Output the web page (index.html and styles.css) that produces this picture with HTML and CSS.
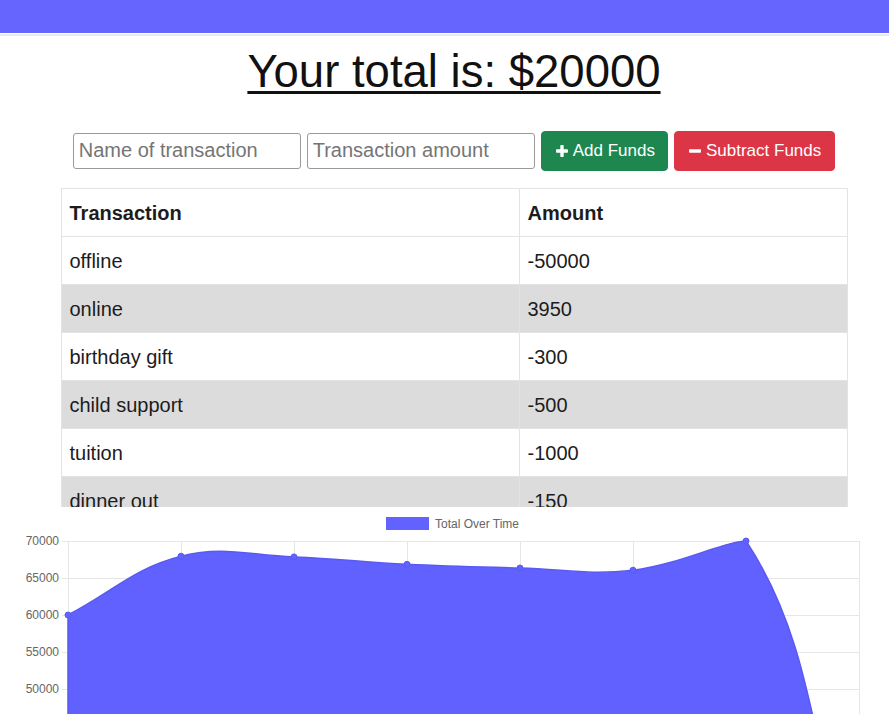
FILE: index.html
```html
<!DOCTYPE html>
<html lang="en">
<head>
<meta charset="utf-8">
<title>Budget Tracker</title>
<link rel="stylesheet" href="styles.css">
</head>
<body>
<div class="topbar"></div>
<main class="main">
  <h1 class="total"><span class="total-text">Your total is: $20000</span></h1>
  <form class="controls">
    <input class="field" type="text" placeholder="Name of transaction">
    <input class="field" type="text" placeholder="Transaction amount">
    <button class="btn btn-add" type="button">
      <svg class="btn-icon" viewBox="0 0 12 12" width="12" height="12"><rect x="4.3" y="0" width="3.4" height="12" rx="0.8"/><rect x="0" y="4.3" width="12" height="3.4" rx="0.8"/></svg>
      <span>Add Funds</span>
    </button>
    <button class="btn btn-sub" type="button">
      <svg class="btn-icon" viewBox="0 0 12 12" width="12" height="12"><rect x="0" y="4.3" width="12" height="3.4" rx="0.8"/></svg>
      <span>Subtract Funds</span>
    </button>
  </form>
  <div class="table-wrap">
    <table class="tx-table">
      <colgroup><col class="col-name"><col class="col-amt"></colgroup>
      <thead>
        <tr><th>Transaction</th><th>Amount</th></tr>
      </thead>
      <tbody>
        <tr><td>offline</td><td>-50000</td></tr>
        <tr><td>online</td><td>3950</td></tr>
        <tr><td>birthday gift</td><td>-300</td></tr>
        <tr><td>child support</td><td>-500</td></tr>
        <tr><td>tuition</td><td>-1000</td></tr>
        <tr><td>dinner out</td><td>-150</td></tr>
      </tbody>
    </table>
  </div>
</main>
<div class="chart">
  <svg class="chart-svg" width="889" height="215" viewBox="0 507 889 215">
    <g class="legend">
      <rect x="386" y="517" width="43" height="13" class="legend-box"/>
      <text x="435" y="528" class="legend-text">Total Over Time</text>
    </g>
    <g class="grid">
      <line x1="62" y1="541.5" x2="860" y2="541.5"/>
      <line x1="62" y1="578.5" x2="860" y2="578.5"/>
      <line x1="62" y1="615.5" x2="860" y2="615.5"/>
      <line x1="62" y1="652.5" x2="860" y2="652.5"/>
      <line x1="62" y1="689.5" x2="860" y2="689.5"/>
      <line x1="62" y1="726.5" x2="860" y2="726.5"/>
      <line x1="68.5" y1="541" x2="68.5" y2="730"/>
      <line x1="181.5" y1="541" x2="181.5" y2="730"/>
      <line x1="294.5" y1="541" x2="294.5" y2="730"/>
      <line x1="407.5" y1="541" x2="407.5" y2="730"/>
      <line x1="520.5" y1="541" x2="520.5" y2="730"/>
      <line x1="633.5" y1="541" x2="633.5" y2="730"/>
      <line x1="746.5" y1="541" x2="746.5" y2="730"/>
      <line x1="859.5" y1="541" x2="859.5" y2="730"/>
    </g>
    <g class="yticks">
      <text x="59" y="545">70000</text>
      <text x="59" y="582">65000</text>
      <text x="59" y="619">60000</text>
      <text x="59" y="656">55000</text>
      <text x="59" y="693">50000</text>
    </g>
    <path class="area" d="M68,615 C113.2,591.5 133.1,568.5 181,556.2 C223.5,545.3 248.85,555.3 294,556.9 C339.25,558.5 361.76,562.1 407,564.3 C452.2,566.5 474.8,566.8 520,568 C565.2,569.2 588.5,575.5 633,570.2 C678.9,564.7 725.05,541 746,541 C815.45,645.7 813.8,763 859,911 L859,1000 L68,1000 Z"/>
    <g class="points">
      <circle cx="68" cy="615" r="3"/>
      <circle cx="181" cy="556.2" r="3"/>
      <circle cx="294" cy="556.9" r="3"/>
      <circle cx="407" cy="564.3" r="3"/>
      <circle cx="520" cy="568" r="3"/>
      <circle cx="633" cy="570.2" r="3"/>
      <circle cx="746" cy="541" r="3"/>
    </g>
  </svg>
</div>
</body>
</html>
```
FILE: styles.css
```css
html, body {
  margin: 0;
  padding: 0;
  background: #fff;
}

body {
  font-family: "Liberation Sans", Arial, sans-serif;
  color: #212529;
  overflow: hidden;
}

.topbar {
  height: 33px;
  background: #6666ff;
  border-bottom: 1px solid #fff;
  box-shadow: 0 2px 0 #ebebeb;
}

.main {
  padding-left: 19px;
  display: flex;
  flex-direction: column;
  align-items: center;
}

.total {
  margin: 11px 0 0;
  font-size: 45.5px;
  line-height: 54px;
  font-weight: normal;
  color: #111;
}

.total-text {
  text-decoration: underline;
  text-decoration-thickness: 3px;
  text-underline-offset: 4px;
}

.controls {
  margin: 32px 0 0;
  display: flex;
  align-items: baseline;
  gap: 6px;
}

.field {
  box-sizing: border-box;
  width: 228px;
  height: 36px;
  margin: 0;
  padding: 0 5px;
  border: 1px solid #999;
  border-radius: 3px;
  font-family: "Liberation Sans", Arial, sans-serif;
  font-size: 20px;
  color: #333;
  background: #fff;
}

.field::placeholder {
  color: #757575;
}

.btn {
  display: inline-flex;
  align-items: center;
  gap: 5px;
  flex: none;
  box-sizing: border-box;
  height: 40px;
  margin: 0;
  padding: 9px 13px 9px 14px;
  border: 1px solid transparent;
  border-radius: 4px;
  font-family: "Liberation Sans", Arial, sans-serif;
  font-size: 17px;
  line-height: 20px;
  white-space: nowrap;
  color: #fff;
  cursor: pointer;
}

.btn-icon {
  display: block;
  fill: #fff;
  flex: none;
}

.btn-add {
  background: #1e8750;
  border-color: #1e8750;
  padding-right: 12px;
}

.btn-sub {
  background: #dc3545;
  border-color: #dc3545;
}

.table-wrap {
  margin-top: 17px;
  width: 787px;
  height: 319px;
  overflow: hidden;
}

.tx-table {
  width: 787px;
  border-collapse: collapse;
  table-layout: fixed;
  font-size: 20px;
  line-height: 24px;
}

.col-name {
  width: 458px;
}

.tx-table th,
.tx-table td {
  padding: 12px 8px 11px;
  text-align: left;
  border: 1px solid #e3e3e3;
  color: #1c1c1c;
}

.tx-table th {
  font-weight: bold;
}

.tx-table tbody tr:nth-child(odd) {
  background: #fff;
}

.tx-table tbody tr:nth-child(even) {
  background: #dcdcdc;
}

.chart-svg {
  display: block;
}

.legend-box {
  fill: #6262ff;
}

.legend-text,
.yticks text {
  font-family: "Liberation Sans", Arial, sans-serif;
  font-size: 12px;
  fill: #666;
}

.yticks text {
  text-anchor: end;
}

.grid line {
  stroke: #e6e6e6;
  stroke-width: 1;
}

.area {
  fill: #6161ff;
  stroke: #5a5af2;
  stroke-width: 1.5;
}

.points circle {
  fill: #6262ff;
  stroke: #5a5af2;
  stroke-width: 1;
}
```
